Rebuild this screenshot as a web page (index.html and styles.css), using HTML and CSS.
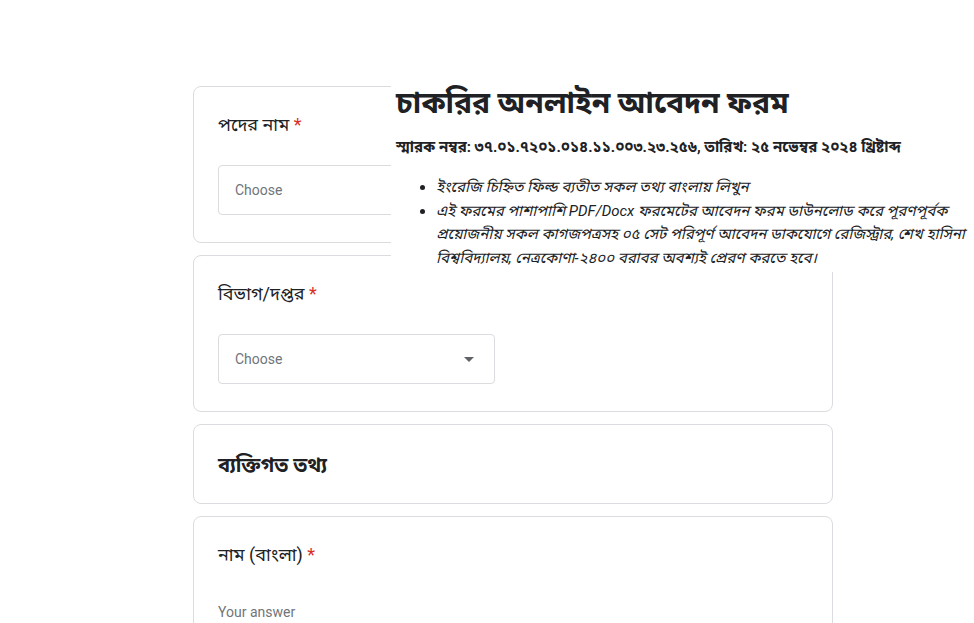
FILE: index.html
```html
<!DOCTYPE html>
<html lang="bn">

<head>
    <meta charset="UTF-8">
    <meta name="viewport" content="width=device-width, initial-scale=1.0">
    <title>চাকরির অনলাইন আবেদন ফরম</title>
    <link rel="stylesheet" href="styles.css">
</head>

<body>
    <div class="form">
        <div class="card">
            <div class="label">পদের নাম <span class="req">*</span></div>
            <div class="select">
                <span>Choose</span>
                <span class="arrow"></span>
            </div>
        </div>

        <div class="card">
            <div class="label">বিভাগ/দপ্তর <span class="req">*</span></div>
            <div class="select">
                <span>Choose</span>
                <span class="arrow"></span>
            </div>
        </div>

        <div class="card section">
            <div class="section-title">ব্যক্তিগত তথ্য</div>
        </div>

        <div class="card">
            <div class="label">নাম (বাংলা) <span class="req">*</span></div>
            <div class="answer">Your answer</div>
        </div>
    </div>

    <div class="notice">
        <h1>চাকরির অনলাইন আবেদন ফরম</h1>
        <p class="memo">স্মারক নম্বর: ৩৭.০১.৭২০১.০১৪.১১.০০৩.২৩.২৫৬, তারিখ: ২৫ নভেম্বর ২০২৪ খ্রিষ্টাব্দ</p>
        <ul>
            <li>ইংরেজি চিহ্নিত ফিল্ড ব্যতীত সকল তথ্য বাংলায় লিখুন</li>
            <li>এই ফরমের পাশাপাশি PDF/Docx ফরমেটের আবেদন ফরম ডাউনলোড করে পূরণপূর্বক প্রয়োজনীয় সকল কাগজপত্রসহ ০৫ সেট পরিপূর্ণ আবেদন ডাকযোগে রেজিস্ট্রার, শেখ হাসিনা বিশ্ববিদ্যালয়, নেত্রকোণা-২৪০০ বরাবর অবশ্যই প্রেরণ করতে হবে।</li>
        </ul>
    </div>
</body>

</html>
```

FILE: styles.css
```css
body {
    font-family: Roboto, "Noto Sans Bengali", "Noto Sans", sans-serif;
    margin: 0;
    background: #fff;
    color: #202124;
}

.form {
    width: 640px;
    margin: 86px 0 0 193px;
}

.card {
    border: 1px solid #dadce0;
    border-radius: 8px;
    padding: 24px 24px 27px;
    margin-bottom: 12px;
    background: #fff;
}

.label {
    font-size: 18px;
    line-height: 28px;
    margin-bottom: 26px;
}

.req {
    color: #d93025;
}

.select {
    width: 277px;
    height: 50px;
    box-sizing: border-box;
    border: 1px solid #dadce0;
    border-radius: 4px;
    padding: 0 16px;
    display: flex;
    align-items: center;
    justify-content: space-between;
    font-size: 14px;
    color: #70757a;
}

.arrow {
    width: 0;
    height: 0;
    border-left: 5px solid transparent;
    border-right: 5px solid transparent;
    border-top: 5px solid #5f6368;
    margin-right: 4px;
}

.section {
    padding: 23px 24px 21px;
}

.section-title {
    font-size: 20px;
    font-weight: bold;
    line-height: 34px;
}

.answer {
    font-size: 14px;
    color: #70757a;
    margin-top: 35px;
}

.notice {
    position: absolute;
    top: 80px;
    left: 391px;
    width: 583px;
    height: 192px;
    background: #fff;
    padding: 0 0 0 5px;
    box-sizing: border-box;
}

.notice h1 {
    font-size: 30px;
    margin: 3px 0 15px;
    line-height: 40px;
}

.notice .memo {
    font-size: 15px;
    font-weight: bold;
    margin: 0 0 18px;
}

.notice ul {
    margin: 0;
    padding-left: 40px;
}

.notice li {
    font-size: 15px;
    font-style: italic;
    line-height: 23.7px;
}
```
